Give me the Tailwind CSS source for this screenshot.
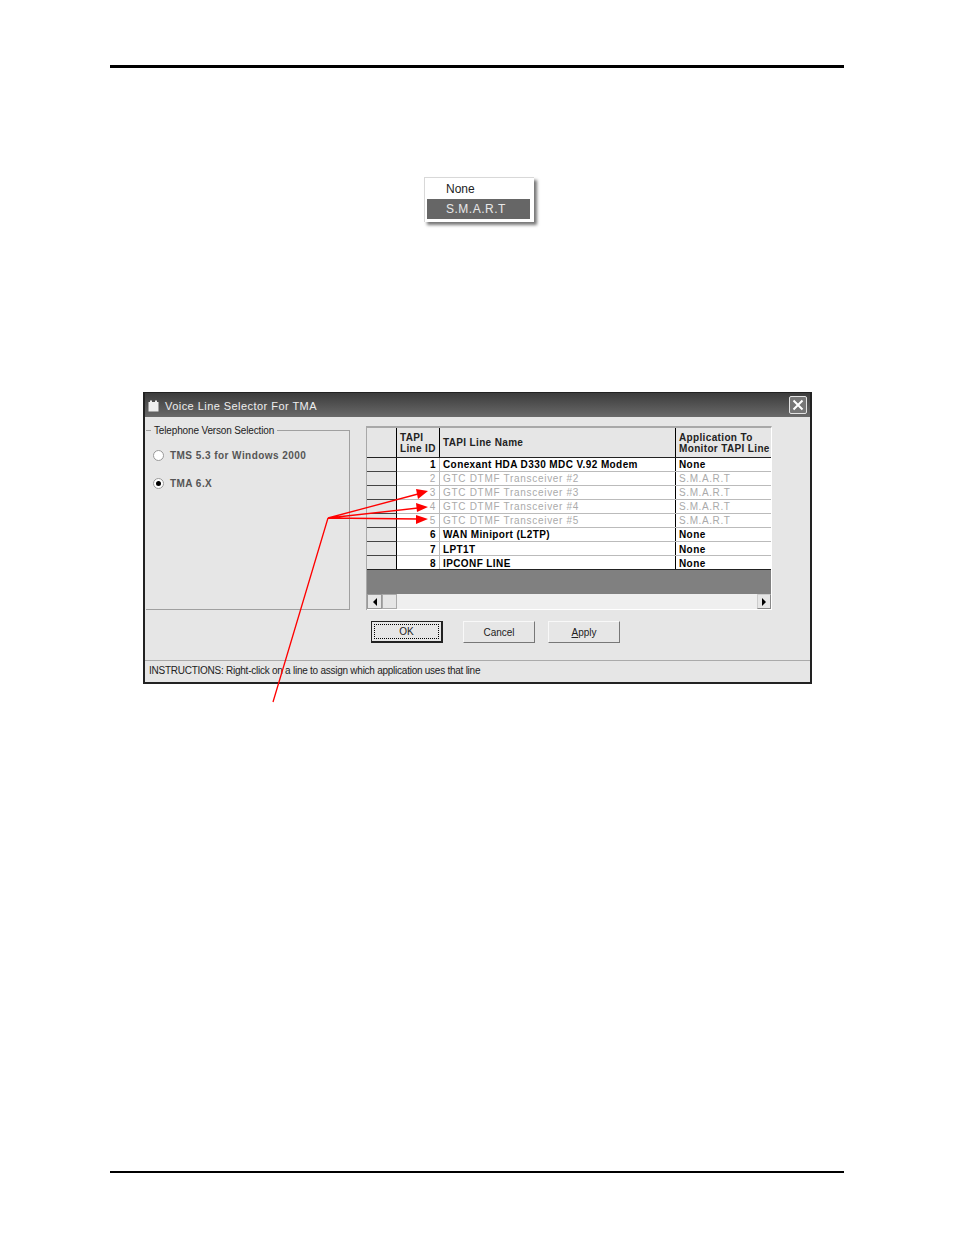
<!DOCTYPE html>
<html>
<head>
<meta charset="utf-8">
<script src="https://cdn.jsdelivr.net/npm/@tailwindcss/browser@4"></script>
</head>
<body class="bg-white font-['Liberation_Sans',Arial,sans-serif]">
<div class="relative h-[1235px] w-[954px] overflow-hidden pt-[65px]">
    <div class="mx-[110px] h-[3px] bg-black"></div>

    <!-- popup menu -->
    <div class="ml-[424px] mt-[109px] h-[45px] w-[110px] border-t border-l border-[#d8d8d8] bg-white pl-[2px] pr-[4px] pt-[2px] shadow-[3px_3px_3px_#777]">
        <div class="h-[19px] pl-[19px] text-[12px] leading-[19px] text-[#222]">None</div>
        <div class="h-[20px] bg-[#666] pl-[19px] text-[12px] leading-[20px] tracking-[0.5px] text-[#e8e8e8]">S.M.A.R.T</div>
    </div>

    <!-- dialog -->
    <div class="ml-[143px] mt-[170px] h-[292px] w-[669px] border-2 border-t border-[#222] border-r-[#222] bg-[#e6e6e6]">
        <div class="flex h-[24px] items-center bg-gradient-to-b from-[#3c3c3c] to-[#6a6a6a] pl-[3px] pr-[3px]">
            <svg width="11" height="12" viewBox="0 0 11 12" class="mr-[6px] mt-[2px]"><rect x="0.5" y="2" width="10" height="9.5" fill="#eee"/><rect x="2" y="0.5" width="2" height="2" fill="#eee"/><rect x="7" y="0.5" width="2" height="2" fill="#eee"/></svg>
            <span class="mt-[3px] text-[11px] font-normal tracking-[0.45px] text-[#eee]">Voice Line Selector For TMA</span>
            <div class="ml-auto flex h-[18px] w-[18px] items-center justify-center rounded-[2px] border border-[#e4e4e4] bg-[#777]">
                <svg width="12" height="12" viewBox="0 0 12 12"><path d="M1.5 1.5L10.5 10.5M10.5 1.5L1.5 10.5" stroke="#fff" stroke-width="2"/></svg>
            </div>
        </div>

        <div class="flex h-[192px] items-start pl-[1px]">
            <!-- group box -->
            <div class="relative mt-[13px] h-[180px] w-[204px] border border-l-0 border-[#a0a0a0]">
                <span class="absolute left-[5px] top-[-6px] bg-[#e6e6e6] px-[3px] text-[10px] leading-[12px] tracking-[-0.15px] text-[#222]">Telephone Verson Selection</span>
                <div class="mt-[18px] flex h-[12px] items-center pl-[7px]">
                    <span class="mr-[6px] h-[11px] w-[11px] rounded-full border border-[#999] bg-white"></span>
                    <span class="text-[10px] font-bold tracking-[0.45px] text-[#555]">TMS 5.3 for Windows 2000</span>
                </div>
                <div class="mt-[16px] flex h-[12px] items-center pl-[7px]">
                    <span class="mr-[6px] flex h-[11px] w-[11px] items-center justify-center rounded-full border border-[#999] bg-white"><span class="h-[5px] w-[5px] rounded-full bg-black"></span></span>
                    <span class="text-[10px] font-bold tracking-[0.45px] text-[#555]">TMA 6.X</span>
                </div>
            </div>

            <!-- grid -->
            <div class="ml-[16px] mt-[9px] h-[184px] w-[406px] border-t-2 border-l border-r border-[#a8a8a8] border-r-white bg-white">
                <div class="flex h-[30px] border-b border-[#222] bg-[#e6e6e6] text-[10px] font-bold leading-[11px] tracking-[0.35px] text-[#222]">
                    <div class="w-[30px] border-r border-black"></div>
                    <div class="w-[43px] border-r border-black pl-[3px] pt-[4px]">TAPI<br>Line ID</div>
                    <div class="flex w-[236px] items-center border-r border-black pl-[3px]">TAPI Line Name</div>
                    <div class="flex-1 pl-[3px] pt-[4px] whitespace-nowrap">Application To<br>Monitor TAPI Line</div>
                </div>

                <div class="flex h-[14px] border-b border-[#bbb] text-[10px] font-bold leading-[13px] tracking-[0.4px] text-black">
                    <div class="h-[14px] w-[30px] border-r border-b border-black border-b-[#444] bg-[#e6e6e6]"></div>
                    <div class="w-[43px] border-r border-[#bbb] pr-[3px] text-right">1</div>
                    <div class="w-[236px] border-r border-black pl-[3px] whitespace-nowrap">Conexant HDA D330 MDC V.92 Modem</div>
                    <div class="flex-1 pl-[3px]">None</div>
                </div>
                <div class="flex h-[14px] border-b border-[#bbb] text-[10px] font-normal leading-[13px] tracking-[0.7px] text-[#aaa]">
                    <div class="h-[14px] w-[30px] border-r border-b border-black border-b-[#444] bg-[#e6e6e6]"></div>
                    <div class="w-[43px] border-r border-[#bbb] pr-[3px] text-right">2</div>
                    <div class="w-[236px] border-r border-black pl-[3px] whitespace-nowrap">GTC DTMF Transceiver #2</div>
                    <div class="flex-1 pl-[3px] tracking-[0.6px]">S.M.A.R.T</div>
                </div>
                <div class="flex h-[14px] border-b border-[#bbb] text-[10px] font-normal leading-[13px] tracking-[0.7px] text-[#aaa]">
                    <div class="h-[14px] w-[30px] border-r border-b border-black border-b-[#444] bg-[#e6e6e6]"></div>
                    <div class="w-[43px] border-r border-[#bbb] pr-[3px] text-right">3</div>
                    <div class="w-[236px] border-r border-black pl-[3px] whitespace-nowrap">GTC DTMF Transceiver #3</div>
                    <div class="flex-1 pl-[3px] tracking-[0.6px]">S.M.A.R.T</div>
                </div>
                <div class="flex h-[14px] border-b border-[#bbb] text-[10px] font-normal leading-[13px] tracking-[0.7px] text-[#aaa]">
                    <div class="h-[14px] w-[30px] border-r border-b border-black border-b-[#444] bg-[#e6e6e6]"></div>
                    <div class="w-[43px] border-r border-[#bbb] pr-[3px] text-right">4</div>
                    <div class="w-[236px] border-r border-black pl-[3px] whitespace-nowrap">GTC DTMF Transceiver #4</div>
                    <div class="flex-1 pl-[3px] tracking-[0.6px]">S.M.A.R.T</div>
                </div>
                <div class="flex h-[14px] border-b border-[#bbb] text-[10px] font-normal leading-[13px] tracking-[0.7px] text-[#aaa]">
                    <div class="h-[14px] w-[30px] border-r border-b border-black border-b-[#444] bg-[#e6e6e6]"></div>
                    <div class="w-[43px] border-r border-[#bbb] pr-[3px] text-right">5</div>
                    <div class="w-[236px] border-r border-black pl-[3px] whitespace-nowrap">GTC DTMF Transceiver #5</div>
                    <div class="flex-1 pl-[3px] tracking-[0.6px]">S.M.A.R.T</div>
                </div>
                <div class="flex h-[14px] border-b border-[#bbb] text-[10px] font-bold leading-[13px] tracking-[0.4px] text-black">
                    <div class="h-[14px] w-[30px] border-r border-b border-black border-b-[#444] bg-[#e6e6e6]"></div>
                    <div class="w-[43px] border-r border-[#bbb] pr-[3px] text-right">6</div>
                    <div class="w-[236px] border-r border-black pl-[3px] whitespace-nowrap">WAN Miniport (L2TP)</div>
                    <div class="flex-1 pl-[3px]">None</div>
                </div>
                <div class="flex h-[14px] border-b border-[#bbb] text-[10px] font-bold leading-[15px] tracking-[0.4px] text-black">
                    <div class="h-[14px] w-[30px] border-r border-b border-black border-b-[#444] bg-[#e6e6e6]"></div>
                    <div class="w-[43px] border-r border-[#bbb] pr-[3px] text-right">7</div>
                    <div class="w-[236px] border-r border-black pl-[3px] whitespace-nowrap">LPT1T</div>
                    <div class="flex-1 pl-[3px]">None</div>
                </div>
                <div class="flex h-[14px] border-b border-[#222] text-[10px] font-bold leading-[15px] tracking-[0.4px] text-black">
                    <div class="w-[30px] border-r border-black bg-[#e6e6e6]"></div>
                    <div class="w-[43px] border-r border-[#bbb] pr-[3px] text-right">8</div>
                    <div class="w-[236px] border-r border-black pl-[3px] whitespace-nowrap">IPCONF LINE</div>
                    <div class="flex-1 pl-[3px]">None</div>
                </div>

                <div class="h-[24px] bg-[#808080]"></div>
                <div class="flex h-[15px] bg-[#efefef]">
                    <div class="flex w-[15px] items-center justify-center border border-[#999] bg-[#e6e6e6]"><span class="border-y-[4px] border-r-[4px] border-y-transparent border-r-black"></span></div>
                    <div class="w-[15px] border border-[#aaa] bg-[#e6e6e6]"></div>
                    <div class="ml-auto flex w-[14px] items-center justify-center border border-[#ccc] border-b-[#888] border-r-[#888] bg-[#e6e6e6]"><span class="border-y-[4px] border-l-[4px] border-y-transparent border-l-black"></span></div>
                </div>
            </div>
        </div>

        <!-- buttons -->
        <div class="mt-[12px] flex h-[22px] pl-[226px] text-[10px] text-[#222]">
            <button class="h-[22px] w-[72px] border border-r-2 border-b-2 border-[#222] bg-[#e6e6e6] p-[2px]"><span class="block h-[15px] border border-dotted border-black leading-[14px]">OK</span></button>
            <button class="ml-[20px] h-[22px] w-[72px] border border-[#f8f8f8] border-r-[#777] border-b-[#777] bg-[#e6e6e6]">Cancel</button>
            <button class="ml-[13px] h-[22px] w-[72px] border border-[#f8f8f8] border-r-[#777] border-b-[#777] bg-[#e6e6e6]"><span class="underline">A</span>pply</button>
        </div>

        <div class="mt-[17px] border-t border-[#aaa] pl-[4px] pt-[3px] text-[10px] leading-[13px] tracking-[-0.25px] text-[#222]">INSTRUCTIONS: Right-click on a line to assign which application uses that line</div>
    </div>

    <div class="absolute bottom-[62px] left-[110px] h-[2px] w-[734px] bg-black"></div>

    <!-- annotation arrows -->
    <svg class="absolute left-0 top-0" width="954" height="1235" viewBox="0 0 954 1235" fill="none">
        <path d="M328 518L273 702M328 518L418 494M328 518L418 508M328 518L418 519" stroke="#f00" stroke-width="1.3"/>
        <path d="M428 491L416 489L418 499ZM428 507L416 503L417 512ZM428 519L416 515L416 524Z" fill="#f00"/>
    </svg>
</div>
</body>
</html>
